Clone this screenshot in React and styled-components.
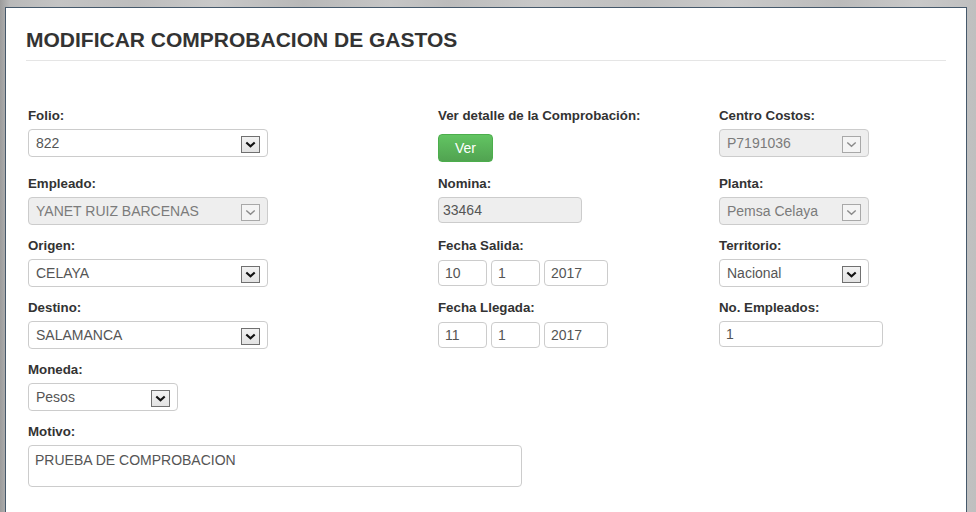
import styled, { createGlobalStyle } from "styled-components";

const GlobalStyle = createGlobalStyle`
  body {
    margin: 0;
    font-family: "Liberation Sans", Arial, sans-serif;
  }
`;

const Chevron = ({ disabled }) => (
  <svg width="11" height="7" viewBox="0 0 11 7">
    <path
      d="M1.3 1.4 L5.5 5.3 L9.7 1.4"
      fill="none"
      stroke={disabled ? "#8a8a8a" : "#111"}
      strokeWidth={disabled ? 1.4 : 2.1}
    />
  </svg>
);

const Select = ({ value, width, disabled }) => (
  <SelectBox $width={width} $disabled={disabled}>
    <SelectValue $disabled={disabled}>{value}</SelectValue>
    <ArrowBox $disabled={disabled}>
      <Chevron disabled={disabled} />
    </ArrowBox>
  </SelectBox>
);

const App = () => {
  return (
    <>
      <GlobalStyle />
      <Page>
        <Panel>
          <Header>
            <Title>MODIFICAR COMPROBACION DE GASTOS</Title>
          </Header>
          <Form>
            <Field>
              <Label>Folio:</Label>
              <Select value="822" width={240} />
            </Field>
            <Field>
              <Label>Ver detalle de la Comprobación:</Label>
              <GreenButton>Ver</GreenButton>
            </Field>
            <Field>
              <Label>Centro Costos:</Label>
              <Select value="P7191036" width={150} disabled />
            </Field>

            <Field>
              <Label>Empleado:</Label>
              <Select value="YANET RUIZ BARCENAS" width={240} disabled />
            </Field>
            <Field>
              <Label>Nomina:</Label>
              <TextInput value="33464" $width={144} $pad={4} disabled readOnly />
            </Field>
            <Field>
              <Label>Planta:</Label>
              <Select value="Pemsa Celaya" width={150} disabled />
            </Field>

            <Field>
              <Label>Origen:</Label>
              <Select value="CELAYA" width={240} />
            </Field>
            <Field>
              <Label>Fecha Salida:</Label>
              <DateRow>
                <TextInput value="10" $width={49} readOnly />
                <TextInput value="1" $width={49} readOnly />
                <TextInput value="2017" $width={64} readOnly />
              </DateRow>
            </Field>
            <Field>
              <Label>Territorio:</Label>
              <Select value="Nacional" width={150} />
            </Field>

            <Field>
              <Label>Destino:</Label>
              <Select value="SALAMANCA" width={240} />
            </Field>
            <Field>
              <Label>Fecha Llegada:</Label>
              <DateRow>
                <TextInput value="11" $width={49} readOnly />
                <TextInput value="1" $width={49} readOnly />
                <TextInput value="2017" $width={64} readOnly />
              </DateRow>
            </Field>
            <Field>
              <Label>No. Empleados:</Label>
              <TextInput value="1" $width={164} readOnly />
            </Field>

            <Field $span={3}>
              <Label>Moneda:</Label>
              <Select value="Pesos" width={150} />
            </Field>

            <Field $span={3}>
              <Label>Motivo:</Label>
              <TextArea value="PRUEBA DE COMPROBACION" readOnly />
            </Field>
          </Form>
        </Panel>
      </Page>
    </>
  );
};

const Page = styled.div`
  height: 512px;
  padding: 7px 9px 0 5px;
  box-sizing: border-box;
  overflow: hidden;
  background: linear-gradient(
    90deg,
    #9c9c9c 0%,
    #b9b9b9 1%,
    #c4c4c4 6%,
    #bdbdbd 14%,
    #c9c9c9 22%,
    #b8b8b8 31%,
    #c6c6c6 40%,
    #bcbcbc 46%,
    #c8c8c8 55%,
    #bfbfbf 66%,
    #cacaca 75%,
    #bbbbbb 86%,
    #c9c9c9 94%,
    #bfbfbf 100%
  );
`;

const Panel = styled.div`
  height: 540px;
  background: #fff;
  border: 1px solid #46596b;
  padding: 20px 20px 0 20px;
`;

const Header = styled.div`
  padding-bottom: 8px;
  border-bottom: 1px solid #e5e5e5;
`;

const Title = styled.h2`
  margin: 0;
  font-size: 21px;
  line-height: 24px;
  font-weight: bold;
  color: #333;
`;

const Form = styled.div`
  display: grid;
  grid-template-columns: 410px 281px 1fr;
  row-gap: 13px;
  margin: 47px 0 0 2px;
`;

const Field = styled.div`
  display: flex;
  flex-direction: column;
  align-items: flex-start;
  grid-column: span ${({ $span }) => $span || 1};
`;

const Label = styled.label`
  font-size: 13.3px;
  line-height: 16px;
  font-weight: bold;
  color: #333;
  margin-bottom: 5px;
`;

const SelectBox = styled.div`
  display: flex;
  align-items: center;
  width: ${({ $width }) => $width}px;
  height: 28px;
  box-sizing: border-box;
  padding: 0 7px 0 7px;
  border: 1px solid #ccc;
  border-radius: 4px;
  background: ${({ $disabled }) => ($disabled ? "#eee" : "#fff")};
`;

const SelectValue = styled.span`
  flex: 1;
  font-size: 14px;
  color: ${({ $disabled }) => ($disabled ? "#7b7b7b" : "#555")};
  white-space: nowrap;
`;

const ArrowBox = styled.span`
  display: flex;
  align-items: center;
  justify-content: center;
  width: 19px;
  height: 17px;
  box-sizing: border-box;
  margin-top: 2px;
  border: 1px solid ${({ $disabled }) => ($disabled ? "#a8a8a8" : "#707070")};
  background: ${({ $disabled }) =>
    $disabled ? "#f4f4f4" : "linear-gradient(#f2f2f2, #e3e3e3)"};
`;

const GreenButton = styled.button`
  margin: 5px 0 1px;
  width: 55px;
  height: 28px;
  padding: 0 0 1px;
  border: 1px solid #4cae4c;
  border-radius: 4px;
  background: linear-gradient(#62c462, #51a351);
  color: #fff;
  font-family: "Liberation Sans", Arial, sans-serif;
  font-size: 14px;
`;

const TextInput = styled.input`
  width: ${({ $width }) => $width}px;
  height: 26px;
  box-sizing: border-box;
  padding: 0 ${({ $pad }) => $pad ?? 6}px;
  border: 1px solid #ccc;
  border-radius: 4px;
  font-family: "Liberation Sans", Arial, sans-serif;
  font-size: 14px;
  color: #555;
  background: #fff;
  outline: none;

  &:disabled {
    background: #eee;
    color: #555;
  }
`;

const DateRow = styled.div`
  display: flex;
  gap: 4px;
  margin-top: 1px;
`;

const TextArea = styled.textarea`
  width: 494px;
  height: 42px;
  box-sizing: border-box;
  padding: 4px 6px;
  border: 1px solid #ccc;
  border-radius: 4px;
  font-family: "Liberation Sans", Arial, sans-serif;
  font-size: 14px;
  line-height: 20px;
  color: #555;
  resize: none;
  outline: none;
`;

export default App;
